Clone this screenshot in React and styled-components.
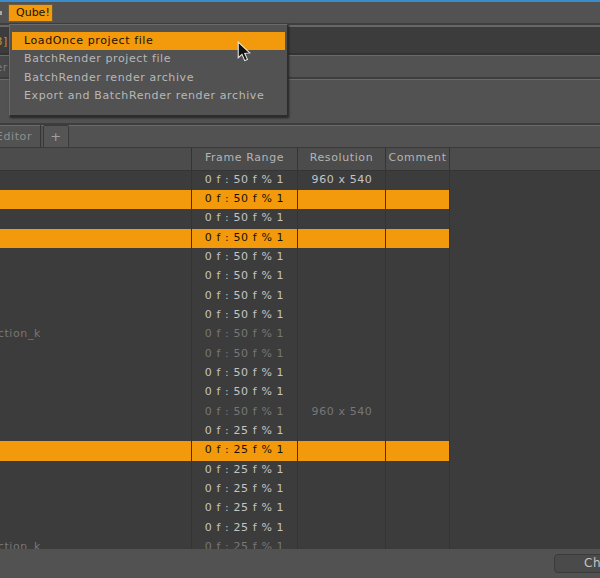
import styled, { createGlobalStyle } from "styled-components"

const GlobalStyle = createGlobalStyle`
    html, body {
        margin: 0;
        padding: 0;
        background: #525252;
    }
    * {
        box-sizing: border-box;
    }
`

const rows = [
    { range: "0 f : 50 f % 1", res: "960 x 540" },
    { range: "0 f : 50 f % 1", on: true },
    { range: "0 f : 50 f % 1" },
    { range: "0 f : 50 f % 1", on: true },
    { range: "0 f : 50 f % 1" },
    { range: "0 f : 50 f % 1" },
    { range: "0 f : 50 f % 1" },
    { range: "0 f : 50 f % 1" },
    { range: "0 f : 50 f % 1", off: true, name: "ction_k" },
    { range: "0 f : 50 f % 1", off: true },
    { range: "0 f : 50 f % 1" },
    { range: "0 f : 50 f % 1" },
    { range: "0 f : 50 f % 1", off: true, res: "960 x 540" },
    { range: "0 f : 25 f % 1" },
    { range: "0 f : 25 f % 1", on: true },
    { range: "0 f : 25 f % 1" },
    { range: "0 f : 25 f % 1" },
    { range: "0 f : 25 f % 1" },
    { range: "0 f : 25 f % 1" },
    { range: "0 f : 25 f % 1", off: true, name: "ction_k" },
]

export default function App() {
    return (
        <Page>
            <GlobalStyle />
            <TopLine />
            <MenuBar>
                <MenuDot />
                <QubeButton>Qube!</QubeButton>
            </MenuBar>
            <DarkBar>
                <Stub $color="#c8922f">3]</Stub>
            </DarkBar>
            <GreyBar>
                <Stub $color="#7d7d7d" $dark>er</Stub>
            </GreyBar>
            <ToolPanel />
            <TabBar>
                <Tab>Editor</Tab>
                <AddTab>+</AddTab>
            </TabBar>
            <Table>
                <HeaderRow>
                    <NameCell />
                    <HeadCell>Frame Range</HeadCell>
                    <HeadCell>Resolution</HeadCell>
                    <HeadCell>Comment</HeadCell>
                </HeaderRow>
                {rows.map((row, i) => (
                    <Row key={i} $on={row.on} $off={row.off}>
                        <NameCell>{row.name}</NameCell>
                        <Cell>{row.range}</Cell>
                        <ResCell>{row.res}</ResCell>
                        <Cell />
                    </Row>
                ))}
                <ColumnEnd />
            </Table>
            <BottomBar>
                <CheckButton>Ch</CheckButton>
            </BottomBar>
            <Menu>
                <MenuItem $active>LoadOnce project file</MenuItem>
                <MenuItem>BatchRender project file</MenuItem>
                <MenuItem>BatchRender render archive</MenuItem>
                <MenuItem>Export and BatchRender render archive</MenuItem>
            </Menu>
            <Cursor viewBox="0 0 14 22" width="15" height="23">
                <path d="M1 1 L1 16 L4.6 12.8 L7.2 18.8 L9.8 17.6 L7.2 11.8 L12 11.4 Z" fill="#111" stroke="#e8e8e8" strokeWidth="1" />
            </Cursor>
        </Page>
    )
}

const Page = styled.div`
    position: relative;
    width: 600px;
    height: 578px;
    overflow: hidden;
    display: flex;
    flex-direction: column;
    background: #525252;
    font-family: "DejaVu Sans", sans-serif;
    font-size: 11px;
    letter-spacing: 0.6px;
    color: #c4c4c4;
`
const TopLine = styled.div`
    height: 2px;
    background: #3a8ccb;
`
const MenuBar = styled.div`
    height: 23px;
    display: flex;
    align-items: center;
    gap: 6px;
    background: #525252;
    border-bottom: 2px solid #3f3f3f;
`
const MenuDot = styled.div`
    width: 2px;
    height: 4px;
    background: #a8a8a8;
`
const QubeButton = styled.div`
    width: 45px;
    height: 18px;
    margin-top: 1px;
    padding-left: 7px;
    line-height: 16px;
    letter-spacing: 0;
    background: #f29a0c;
    color: #1b1200;
    border: 1px solid #6f5a3a;
    border-radius: 1px;
`
const DarkBar = styled.div`
    height: 30px;
    display: flex;
    align-items: center;
    background: #3c3c3c;
    border-top: 2px solid #676767;
    border-bottom: 2px solid #343434;
`
const GreyBar = styled.div`
    height: 24px;
    display: flex;
    align-items: stretch;
    background: #525252;
    border-top: 1px solid #6a6a6a;
    border-bottom: 2px solid #3d3d3d;
`
const Stub = styled.div`
    width: 9px;
    display: flex;
    justify-content: flex-end;
    align-items: center;
    padding-top: 2px;
    padding-right: 1px;
    overflow: hidden;
    white-space: nowrap;
    color: ${props => props.$color};
    background: ${props => props.$dark ? "#484848" : "transparent"};
`
const ToolPanel = styled.div`
    height: 46px;
    background: #525252;
    border-top: 1px solid #6a6a6a;
    border-bottom: 2px solid #3d3d3d;
`
const TabBar = styled.div`
    height: 23px;
    display: flex;
    align-items: flex-end;
    background: #525252;
    border-top: 1px solid #6a6a6a;
    border-bottom: 1px solid #3a3a3a;
`
const Tab = styled.div`
    width: 41px;
    height: 22px;
    display: flex;
    justify-content: flex-end;
    align-items: center;
    padding-right: 8px;
    overflow: hidden;
    color: #8f8f8f;
    border-right: 1px solid #353535;
`
const AddTab = styled.div`
    width: 26px;
    height: 22px;
    margin-left: 2px;
    text-align: center;
    line-height: 21px;
    font-size: 13px;
    color: #a0a0a0;
    background: #555;
    border: 1px solid #3a3a3a;
    border-bottom: none;
    border-radius: 2px 2px 0 0;
`
const Table = styled.div`
    position: relative;
    flex: 1;
    overflow: hidden;
    background: #3c3c3c;
`
const HeaderRow = styled.div`
    height: 22.67px;
    display: grid;
    grid-template-columns: 191px 106px 88px 64px;
    background: #4c4c4c;
    border-bottom: 1px solid #343434;
`
const Row = styled.div`
    width: 449px;
    height: 19.33px;
    display: grid;
    grid-template-columns: 191px 106px 88px 64px;
    line-height: 18px;
    text-align: center;
    background: ${props => props.$on ? "#f29a0c" : "transparent"};
    color: ${props => props.$on ? "#1a1200" : props.$off ? "#777" : "#c4c4c4"};
`
const NameCell = styled.div`
    display: flex;
    justify-content: flex-end;
    padding-right: 150px;
    white-space: nowrap;
`
const Cell = styled.div`
    border-left: 1px solid #343434;
    white-space: nowrap;
    overflow: hidden;
`
const ResCell = styled(Cell)`
    padding-left: 1px;
`
const HeadCell = styled(Cell)`
    line-height: 19px;
    text-align: center;
    color: #b4b4b4;
`
const ColumnEnd = styled.div`
    position: absolute;
    top: 0;
    bottom: 0;
    left: 449px;
    width: 1px;
    background: #343434;
`
const BottomBar = styled.div`
    height: 29px;
    display: flex;
    justify-content: flex-end;
    align-items: center;
    background: #525252;
`
const CheckButton = styled.div`
    width: 50px;
    height: 19px;
    margin-right: -4px;
    padding-left: 29px;
    line-height: 17px;
    font-size: 12px;
    background: #4a4a4a;
    border: 1px solid #3a3a3a;
    border-radius: 4px;
`
const Menu = styled.div`
    position: absolute;
    top: 24px;
    left: 9px;
    width: 279px;
    height: 93px;
    padding: 7px 2px;
    background: #525252;
    border: 1px solid #6a6a6a;
    border-right-color: #2c2c2c;
    border-bottom: 2px solid #2c2c2c;
    box-shadow: 1px 1px 2px #222;
`
const MenuItem = styled.div`
    height: 18.33px;
    padding-left: 12px;
    line-height: 18px;
    white-space: nowrap;
    color: ${props => props.$active ? "#1a1200" : "#b8b8b8"};
    background: ${props => props.$active ? "#f29a0c" : "transparent"};
`
const Cursor = styled.svg`
    position: absolute;
    left: 237px;
    top: 41px;
`
